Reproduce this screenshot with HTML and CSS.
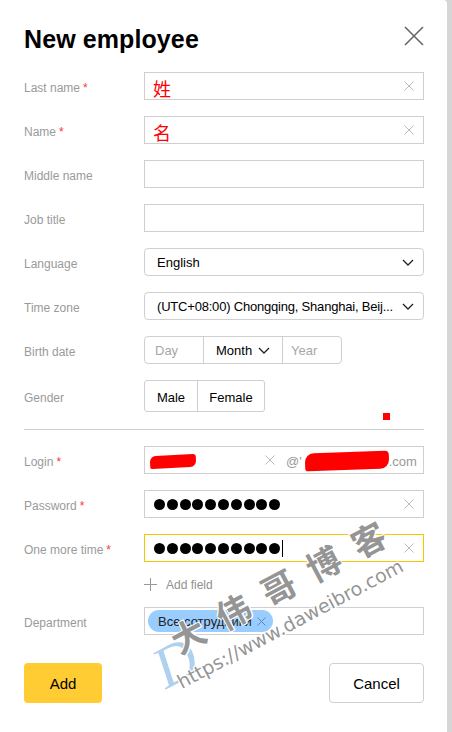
FILE: index.html
```html
<!DOCTYPE html>
<html>
<head>
<meta charset="utf-8">
<link rel="stylesheet" href="styles.css">
</head>
<body>
<div class="dialog">
  <div class="header">
    <h1 class="title">New employee</h1>
    <svg class="close" width="20" height="20" viewBox="0 0 20 20"><path d="M1 1L19 19M19 1L1 19" stroke="#666" stroke-width="1.6" fill="none"/></svg>
  </div>

  <div class="row">
    <div class="label">Last name<span class="req">*</span></div>
    <div class="input"><span class="cjk">姓</span><svg class="clear" width="10" height="10" viewBox="0 0 10 10"><path d="M0.5 0.5L9.5 9.5M9.5 0.5L0.5 9.5" stroke="#bbb" stroke-width="1" fill="none"/></svg></div>
  </div>
  <div class="row">
    <div class="label">Name<span class="req">*</span></div>
    <div class="input"><span class="cjk">名</span><svg class="clear" width="10" height="10" viewBox="0 0 10 10"><path d="M0.5 0.5L9.5 9.5M9.5 0.5L0.5 9.5" stroke="#bbb" stroke-width="1" fill="none"/></svg></div>
  </div>
  <div class="row">
    <div class="label">Middle name</div>
    <div class="input"></div>
  </div>
  <div class="row">
    <div class="label">Job title</div>
    <div class="input"></div>
  </div>
  <div class="row">
    <div class="label">Language</div>
    <div class="select"><span class="val">English</span><svg class="chev" width="12" height="7" viewBox="0 0 12 7"><path d="M1 1L6 6L11 1" stroke="#222" stroke-width="1.3" fill="none"/></svg></div>
  </div>
  <div class="row">
    <div class="label">Time zone</div>
    <div class="select"><span class="val tz">(UTC+08:00) Chongqing, Shanghai, Beij...</span><svg class="chev" width="12" height="7" viewBox="0 0 12 7"><path d="M1 1L6 6L11 1" stroke="#222" stroke-width="1.3" fill="none"/></svg></div>
  </div>
  <div class="row">
    <div class="label">Birth date</div>
    <div class="date">
      <div class="cell day ph">Day</div>
      <div class="cell month">Month<svg class="chev-s" width="12" height="7" viewBox="0 0 12 7"><path d="M1 1L6 6L11 1" stroke="#222" stroke-width="1.3" fill="none"/></svg></div>
      <div class="cell year ph">Year</div>
    </div>
  </div>
  <div class="row tall">
    <div class="label">Gender</div>
    <div class="gender">
      <div class="gbtn male">Male</div>
      <div class="gbtn female">Female</div>
    </div>
  </div>
  <span class="redmark"></span>
  <div class="divider"></div>

  <div class="row">
    <div class="label">Login<span class="req">*</span></div>
    <div class="input login">
      <span class="scribble s1"></span>
      <svg class="clear-login" width="10" height="10" viewBox="0 0 10 10"><path d="M0.5 0.5L9.5 9.5M9.5 0.5L0.5 9.5" stroke="#bbb" stroke-width="1" fill="none"/></svg>
      <span class="domain">@'<span class="scribble s2"></span>.com</span>
    </div>
  </div>
  <div class="row">
    <div class="label">Password<span class="req">*</span></div>
    <div class="input"><span class="dots"><i></i><i></i><i></i><i></i><i></i><i></i><i></i><i></i><i></i><i></i></span><svg class="clear" width="10" height="10" viewBox="0 0 10 10"><path d="M0.5 0.5L9.5 9.5M9.5 0.5L0.5 9.5" stroke="#bbb" stroke-width="1" fill="none"/></svg></div>
  </div>
  <div class="row">
    <div class="label">One more time<span class="req">*</span></div>
    <div class="input focus"><span class="dots"><i></i><i></i><i></i><i></i><i></i><i></i><i></i><i></i><i></i><i></i><b class="caret"></b></span><svg class="clear" width="10" height="10" viewBox="0 0 10 10"><path d="M0.5 0.5L9.5 9.5M9.5 0.5L0.5 9.5" stroke="#bbb" stroke-width="1" fill="none"/></svg></div>
  </div>
  <div class="addfield">
    <svg width="13" height="13" viewBox="0 0 13 13"><path d="M6.5 0V13M0 6.5H13" stroke="#999" stroke-width="1" fill="none"/></svg>
    <span>Add field</span>
  </div>
  <div class="row last">
    <div class="label">Department</div>
    <div class="input tags"><span class="tag">Все сотрудники<svg width="9" height="9" viewBox="0 0 9 9"><path d="M0.5 0.5L8.5 8.5M8.5 0.5L0.5 8.5" stroke="#5a86b8" stroke-width="1" fill="none"/></svg></span></div>
  </div>

  <div class="actions">
    <div class="btn add">Add</div>
    <div class="btn cancel">Cancel</div>
  </div>

  <div class="watermark">
    <div class="wm-logo">D</div>
    <div class="wm-cn">大伟哥博客</div>
    <div class="wm-url">https://www.daweibro.com</div>
  </div>
</div>
</body>
</html>
```

FILE: styles.css
```css
html, body {
  margin: 0;
  padding: 0;
}
body {
  background: #d6d6d6;
  width: 452px;
  height: 732px;
  overflow: hidden;
  font-family: "Liberation Sans", Arial, sans-serif;
  color: #000;
}
.dialog {
  position: relative;
  width: 447px;
  height: 732px;
  box-sizing: border-box;
  background: #fff;
  border-top-right-radius: 4px;
  padding: 25px 23px 0 24px;
  overflow: hidden;
}
.header {
  display: flex;
  justify-content: space-between;
  align-items: flex-start;
  height: 28px;
  margin-bottom: 19px;
}
.title {
  margin: 0;
  font-size: 25px;
  line-height: 28px;
  font-weight: bold;
  letter-spacing: 0.1px;
}
.close {
  margin-top: 1px;
}
.row {
  display: flex;
  align-items: center;
  height: 28px;
  margin-bottom: 16px;
}
.row.tall {
  height: 32px;
  margin-bottom: 0;
}
.row.last {
  margin-bottom: 28px;
}
.label {
  width: 120px;
  flex: none;
  font-size: 12px;
  color: #9a9a9a;
  padding-top: 3px;
}
.req {
  color: #f33;
  margin-left: 3px;
}
.input {
  position: relative;
  width: 280px;
  height: 28px;
  box-sizing: border-box;
  border: 1px solid #cfcfcf;
  display: flex;
  align-items: center;
  padding-left: 12px;
}
.input.focus {
  border-color: #f5c800;
}
.cjk {
  font-family: "Noto Sans CJK SC", sans-serif;
  color: #f00;
  font-size: 18px;
  line-height: 20px;
  margin-left: -4px;
  margin-top: 3px;
}
.clear {
  position: absolute;
  right: 9px;
  top: 8px;
}
.select {
  width: 280px;
  height: 28px;
  box-sizing: border-box;
  border: 1px solid #cfcfcf;
  border-radius: 4px;
  display: flex;
  align-items: center;
  justify-content: space-between;
  padding: 0 9px 0 12px;
  font-size: 13px;
}
.tz {
  letter-spacing: -0.2px;
}
.date {
  display: flex;
  height: 28px;
  box-sizing: border-box;
  border: 1px solid #cfcfcf;
  border-radius: 4px;
  font-size: 13px;
}
.cell {
  display: flex;
  align-items: center;
  box-sizing: border-box;
}
.cell.day {
  width: 59px;
  padding-left: 10px;
  border-right: 1px solid #cfcfcf;
}
.cell.month {
  width: 79px;
  padding-left: 12px;
  border-right: 1px solid #cfcfcf;
}
.chev-s {
  margin-left: 6px;
}
.cell.year {
  width: 58px;
  padding-left: 8px;
}
.ph {
  color: #a6a6a6;
}
.gender {
  display: flex;
  height: 32px;
  box-sizing: border-box;
  border: 1px solid #cfcfcf;
  border-radius: 3px;
  font-size: 13px;
}
.gbtn {
  display: flex;
  align-items: center;
  justify-content: center;
  box-sizing: border-box;
  padding-top: 2px;
}
.gbtn.male {
  width: 53px;
  border-right: 1px solid #cfcfcf;
}
.gbtn.female {
  width: 66px;
}
.redmark {
  position: absolute;
  left: 383px;
  top: 413px;
  width: 7px;
  height: 7px;
  background: #f00;
}
.divider {
  height: 1px;
  background: #cfcfcf;
  margin: 17px 0 16px;
}
.login {
  padding-left: 5px;
}
.scribble {
  display: inline-block;
  background: #f00;
  border-radius: 6px 3px 6px 2px;
}
.s1 {
  width: 46px;
  height: 13px;
  transform: rotate(-3deg);
  margin-top: 2px;
}
.clear-login {
  position: absolute;
  left: 120px;
  top: 8px;
}
.domain {
  position: absolute;
  left: 141px;
  top: 5px;
  font-size: 13px;
  color: #999;
  display: flex;
  align-items: center;
}
.s2 {
  width: 84px;
  height: 18px;
  margin-left: 3px;
  border-radius: 9px 4px 9px 3px;
  transform: rotate(-2deg);
}
.dots {
  display: flex;
  align-items: center;
  gap: 1.8px;
  margin-left: -3px;
}
.dots i {
  display: block;
  width: 11px;
  height: 11px;
  border-radius: 50%;
  background: #000;
}
.caret {
  display: block;
  width: 1px;
  height: 17px;
  background: #000;
}
.addfield {
  display: flex;
  align-items: center;
  margin: 0 0 16px 120px;
  height: 13px;
  font-size: 12px;
  color: #909090;
}
.addfield svg {
  margin-right: 9px;
}
.tags {
  padding-left: 3px;
}
.tag {
  display: flex;
  align-items: center;
  height: 22px;
  padding: 0 7px 0 10px;
  background: #99ccff;
  border-radius: 11px;
  font-size: 13px;
  color: #222;
}
.tag svg {
  margin-left: 5px;
}
.actions {
  display: flex;
  justify-content: space-between;
}
.btn {
  height: 40px;
  box-sizing: border-box;
  display: flex;
  align-items: center;
  justify-content: center;
  border-radius: 4px;
  font-size: 15px;
}
.btn.add {
  width: 78px;
  background: #ffcc33;
}
.btn.cancel {
  width: 95px;
  border: 1px solid #cfcfcf;
}
.watermark {
  position: absolute;
  left: 180px;
  top: 690px;
  width: 0;
  height: 0;
  pointer-events: none;
  transform: rotate(-28deg);
  transform-origin: 0 0;
}
.wm-logo {
  position: absolute;
  left: -12px;
  top: -56px;
  font-family: "Liberation Serif", serif;
  font-style: italic;
  font-size: 58px;
  line-height: 60px;
  color: rgba(80, 150, 220, 0.45);
}
.wm-cn {
  position: absolute;
  left: 16px;
  top: -63px;
  white-space: nowrap;
  font-family: "Noto Sans CJK SC", sans-serif;
  font-size: 34px;
  line-height: 36px;
  font-weight: bold;
  letter-spacing: 17px;
  color: rgba(120, 120, 120, 0.8);
  text-shadow: 1px 1px 0 #fff, -1px -1px 0 #fff, 1px -1px 0 #fff, -1px 1px 0 #fff;
}
.wm-url {
  position: absolute;
  left: 2px;
  top: -17px;
  white-space: nowrap;
  font-family: "DejaVu Sans", sans-serif;
  font-size: 19px;
  line-height: 20px;
  color: rgba(120, 120, 120, 0.8);
  text-shadow: 1px 1px 0 #fff, -1px -1px 0 #fff, 1px -1px 0 #fff, -1px 1px 0 #fff;
}
```
